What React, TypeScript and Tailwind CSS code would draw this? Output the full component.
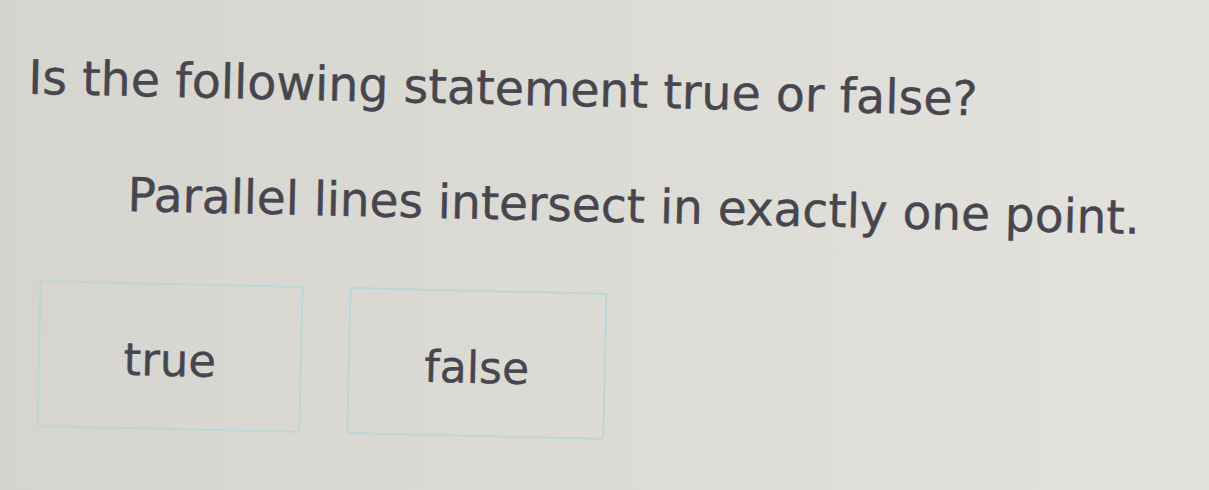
export default function App() {
  return (
    <div className="w-[1209px] h-[490px] bg-gradient-to-r from-[#d5d4ce] via-[#dcdbd5] to-[#e3e2de] text-[#47464f] font-['DejaVu_Sans',sans-serif] [-webkit-text-stroke:0.4px_#47464f] overflow-hidden">
      {/* question block, slightly tilted like the screen it sits on */}
      <div className="origin-top-left rotate-[1.3deg] pt-[49px] pl-[30px]">
        <h1 className="text-[47.5px] leading-[56px] whitespace-nowrap">Is the following statement true or false?</h1>
        <p className="mt-[59px] pl-[102px] text-[47px] leading-[56px] whitespace-nowrap">
          Parallel lines intersect in exactly one point.
        </p>
        <div className="mt-[59px] pl-[16px] flex gap-[46px]">
          <button className="w-[264px] h-[147px] pt-[8px] border-2 border-[#bdd6d8] rounded-[3px] text-[45px] leading-none">
            true
          </button>
          <button className="w-[258px] h-[147px] pt-[8px] border-2 border-[#bdd6d8] rounded-[3px] text-[44px] leading-none">
            false
          </button>
        </div>
      </div>
    </div>
  );
}
